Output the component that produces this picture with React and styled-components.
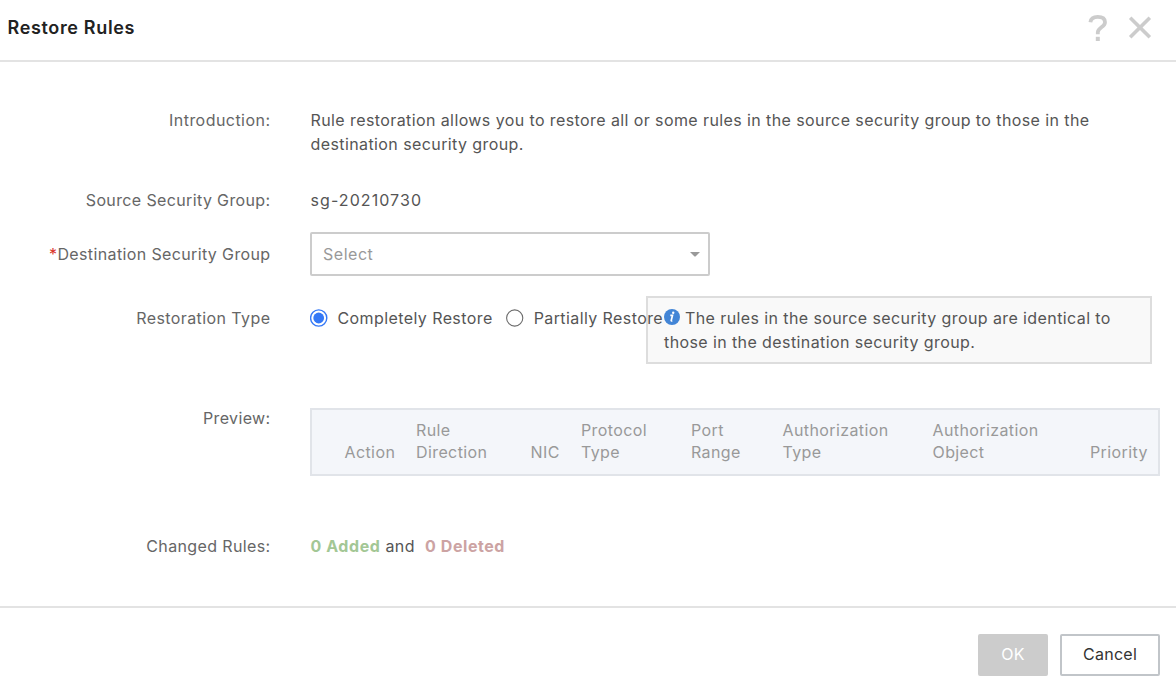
import React from 'react';
import styled, { createGlobalStyle } from 'styled-components';

const GlobalStyle = createGlobalStyle`
  *, *::before, *::after { box-sizing: border-box; }
  body {
    margin: 0;
    background: #fff;
    color: #555;
    font: 400 16px/24px Inter, "Liberation Sans", sans-serif;
    letter-spacing: 0.4px;
  }
`;

const Dialog = styled.section`
  display: flex;
  flex-direction: column;
  width: 1176px;
  height: 696px;
  overflow: hidden;
`;

const Header = styled.header`
  display: flex;
  align-items: center;
  justify-content: space-between;
  flex: none;
  height: 62px;
  padding: 0 24px 4px 7.5px;
  border-bottom: 2px solid #e3e3e3;
`;

const Title = styled.h1`
  margin: 0;
  color: #222;
  font-size: 18px;
  font-weight: 600;
  letter-spacing: 0.65px;
`;

const HeaderActions = styled.div`
  display: flex;
  align-items: center;
  gap: 20px;
`;

const IconButton = styled.button`
  display: flex;
  padding: 0;
  border: 0;
  background: none;
`;

const Form = styled.main`
  display: flex;
  flex-direction: column;
  flex: 1;
  padding-top: 46px;
`;

const Row = styled.div`
  display: flex;
  align-items: flex-start;
  gap: 39.5px;
  height: ${(p) => p.$height}px;
`;

const Label = styled.div`
  flex: none;
  width: 270.5px;
  padding-top: ${(p) => p.$top || 0}px;
  color: #666;
  line-height: ${(p) => p.$line || 24}px;
  text-align: right;
  white-space: nowrap;
  letter-spacing: ${(p) => p.$spacing || 0.37}px;
`;

const Required = styled.span`
  color: #d93026;
`;

const Text = styled.div`
  width: ${(p) => p.$width || 'auto'};
  padding-left: 0.5px;
  letter-spacing: ${(p) => p.$spacing || 0.405}px;
`;

const SelectBox = styled.div`
  display: flex;
  align-items: center;
  justify-content: space-between;
  width: 400px;
  height: 44px;
  padding: 0 8px 0 11px;
  border: 2px solid #ccc;
  border-radius: 2px;
  color: #999;
  letter-spacing: 0.52px;
`;

const TypeField = styled.div`
  display: flex;
`;

const RadioGroup = styled.div`
  position: relative;
  z-index: 1;
  display: flex;
  width: 336px;
  gap: 13.5px;
  padding-top: 10px;
  white-space: nowrap;
`;

const RadioLabel = styled.label`
  display: flex;
  align-items: center;
  flex: none;
  gap: 9.5px;
  height: 24px;
  letter-spacing: 0.41px;
`;

const Hint = styled.div`
  width: 506px;
  height: 68px;
  padding: 8px 16px;
  border: 2px solid #ddd;
  background: #f9f9f9;
`;

const HintIcon = styled.svg`
  margin-right: 5px;
  vertical-align: -1px;
`;

const TableHead = styled.div`
  display: grid;
  grid-template-columns: 71.5px 114.5px 50.5px 110px 91.5px 150px 157.5px 58px;
  align-items: end;
  width: 850px;
  height: 68px;
  padding: 0 0 11px 32.5px;
  border: 2px solid #e1e4e9;
  background: #f4f6fa;
  color: #999;
  line-height: 22px;
  letter-spacing: 0.4px;
`;

const HeadCell = styled.div`
  white-space: pre-line;
`;

const Changes = styled.div`
  display: flex;
  padding-left: 0.5px;
  white-space: pre;
  letter-spacing: 0.5px;
`;

const Count = styled.strong`
  color: ${(p) => p.$color};
  font-weight: 700;
  letter-spacing: 0.56px;
`;

const Footer = styled.footer`
  display: flex;
  justify-content: flex-end;
  flex: none;
  gap: 12px;
  height: 90px;
  padding: 26px 16px 0 0;
  border-top: 2px solid #e3e3e3;
`;

const Button = styled.button`
  width: ${(p) => p.$width}px;
  height: 42px;
  padding: 0 0 2px;
  border: 2px solid ${(p) => (p.$disabled ? '#ccc' : '#c1c5c9')};
  border-radius: 2px;
  background: ${(p) => (p.$disabled ? '#ccc' : '#fff')};
  color: ${(p) => (p.$disabled ? '#fff' : '#333')};
  font: inherit;
  letter-spacing: 0.28px;
`;

const columns = [
  'Action', 'Rule\nDirection', 'NIC', 'Protocol\nType', 'Port\nRange',
  'Authorization\nType', 'Authorization\nObject', 'Priority',
];

function Radio({ on, children }) {
  return (
    <RadioLabel>
      <svg width="18" height="18" viewBox="0 0 18 18" fill="none">
        <circle cx="8.7" cy="9" r="8.1" stroke={on ? '#3478f6' : '#6b6b6b'} strokeWidth={on ? 1.4 : 1.1} />
        {on && <circle cx="8.7" cy="9" r="5.4" fill="#3478f6" />}
      </svg>
      {children}
    </RadioLabel>
  );
}

export default function App() {
  return (
    <Dialog>
      <GlobalStyle />
      <Header>
        <Title>Restore Rules</Title>
        <HeaderActions>
          <IconButton aria-label="Help">
            <svg width="20" height="28" viewBox="0 0 20 28" fill="none" stroke="#ccc" strokeWidth="3.8">
              <path d="M2.4 8.2C2.9 4.4 5.4 2.9 9.7 2.9C14.3 2.9 17 4.8 17 8.2C17 13.3 9.8 13.3 9.8 18.6V20.2" />
              <path d="M9.8 22.8V27" strokeWidth="4" />
            </svg>
          </IconButton>
          <IconButton aria-label="Close">
            <svg width="24" height="24" viewBox="0 0 24 24" fill="none" stroke="#ccc" strokeWidth="3.6">
              <path d="M2.2 1.7L21.8 21.3M21.8 1.7L2.2 21.3" />
            </svg>
          </IconButton>
        </HeaderActions>
      </Header>
      <Form>
        <Row $height={80}>
          <Label $spacing={0.46}>Introduction:</Label>
          <Text $width="800px">
            Rule restoration allows you to restore all or some rules in the source security group to those in the destination security group.
          </Text>
        </Row>
        <Row $height={44}>
          <Label>Source Security Group:</Label>
          <Text $spacing={1.08}>sg-20210730</Text>
        </Row>
        <Row $height={64}>
          <Label $top={10}><Required>*</Required>Destination Security Group</Label>
          <SelectBox>
            Select
            <svg width="10" height="5" viewBox="0 0 10 5" fill="#999"><path d="M0 0H10L6 4Q5 5 4 4Z" /></svg>
          </SelectBox>
        </Row>
        <Row $height={112}>
          <Label $top={10} $spacing={0.42}>Restoration Type</Label>
          <TypeField>
            <RadioGroup>
              <Radio on>Completely Restore</Radio>
              <Radio>Partially Restore</Radio>
            </RadioGroup>
            <Hint>
              <HintIcon width="16" height="16" viewBox="0 0 16 16">
                <circle cx="8" cy="8" r="8" fill="#4285d6" />
                <path d="M6.3 6.4H8.5L7.2 11.6Q7.2 12 8.3 11.8" fill="none" stroke="#fff" strokeWidth="1.7" />
                <circle cx="9.2" cy="3.8" r="1.2" fill="#fff" />
              </HintIcon>
              The rules in the source security group are identical to those in the destination security group.
            </Hint>
          </TypeField>
        </Row>
        <Row $height={126}>
          <Label $line={20}>Preview:</Label>
          <TableHead>
            {columns.map((name) => <HeadCell key={name}>{name}</HeadCell>)}
          </TableHead>
        </Row>
        <Row $height={24}>
          <Label>Changed Rules:</Label>
          <Changes>
            <Count $color="#a3c795">0 Added</Count>{' and  '}<Count $color="#cca3a3">0 Deleted</Count>
          </Changes>
        </Row>
      </Form>
      <Footer>
        <Button $width={70} $disabled disabled>OK</Button>
        <Button $width={100}>Cancel</Button>
      </Footer>
    </Dialog>
  );
}
